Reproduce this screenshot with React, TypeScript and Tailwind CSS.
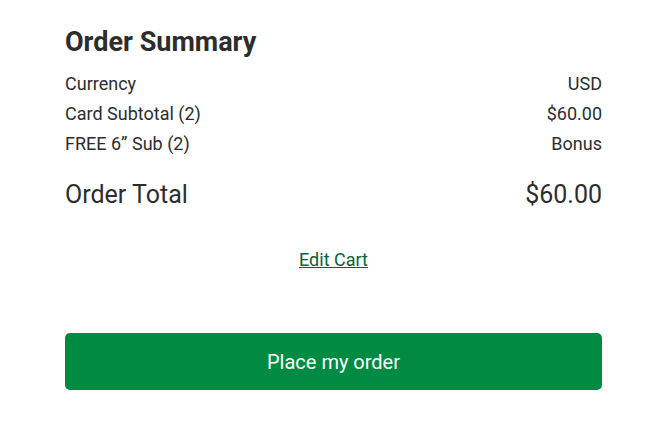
export default function App() {
  return (
    <div className="w-[665px] h-[422px] bg-white pl-[65px] pr-[63px] pt-[28px] text-[#2d2d2d]" style={{ fontFamily: 'Roboto, "Liberation Sans", sans-serif' }}>
      <h2 className="text-[27px] leading-[28px] font-bold">Order Summary</h2>
      <div className="mt-[13px] text-[18px]">
        <div className="flex justify-between leading-[30px]"><span>Currency</span><span>USD</span></div>
        <div className="flex justify-between leading-[30px]"><span>Card Subtotal (2)</span><span>$60.00</span></div>
        <div className="flex justify-between leading-[30px]"><span>FREE 6” Sub (2)</span><span>Bonus</span></div>
      </div>
      <div className="mt-[21px] flex justify-between text-[25px] leading-[30px]">
        <span>Order Total</span><span>$60.00</span>
      </div>
      <div className="mt-[38px] flex justify-center">
        <a href="#" className="text-[18px] leading-[24px] underline text-[#0a6236]">Edit Cart</a>
      </div>
      <button className="mt-[61px] w-full h-[57px] rounded-[5px] bg-[#008a42] text-white text-[20px]">Place my order</button>
    </div>
  );
}
